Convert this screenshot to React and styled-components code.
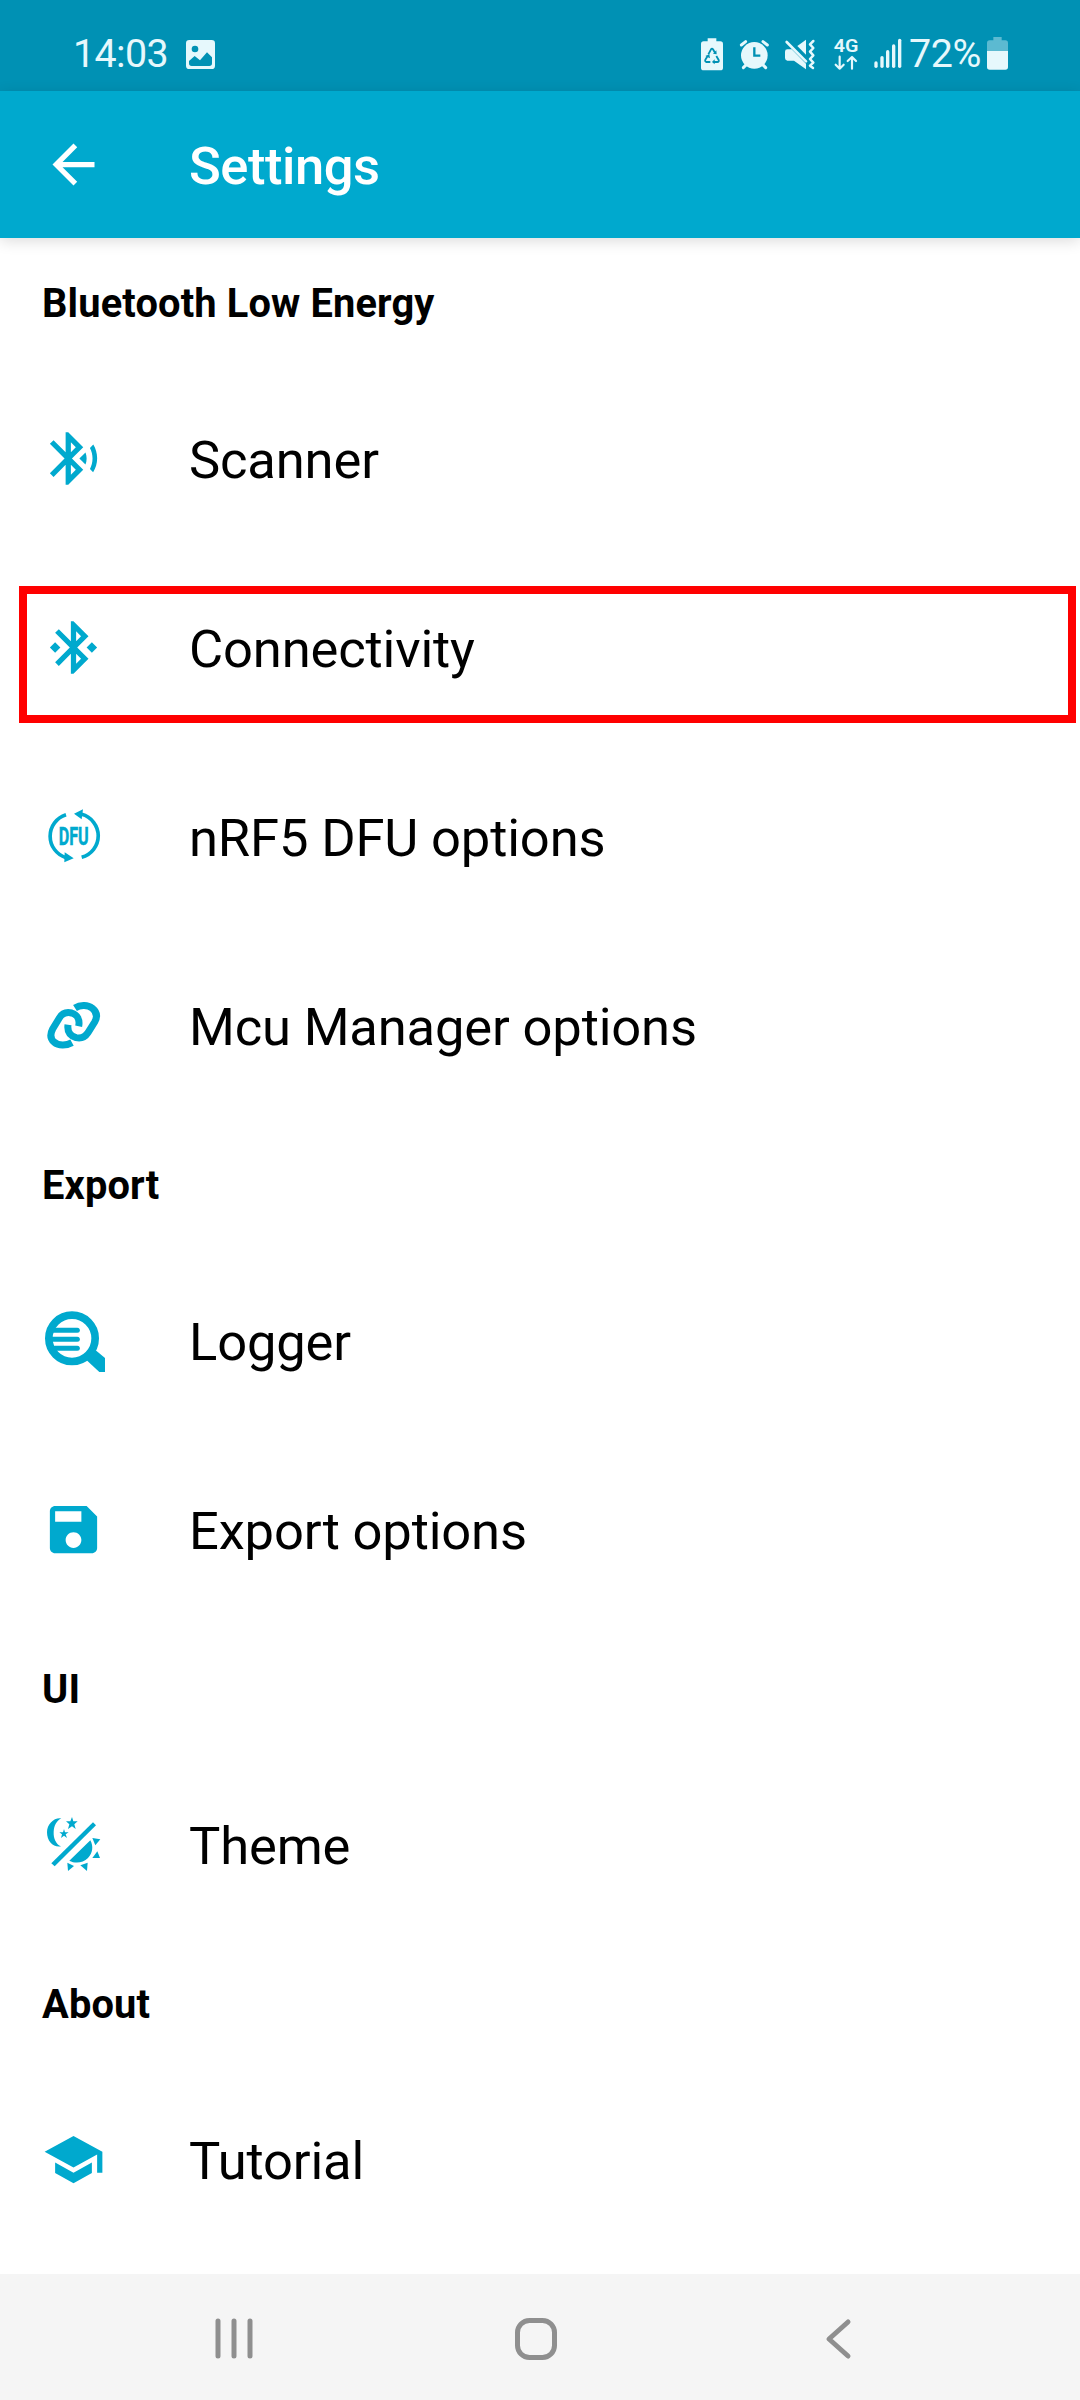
import React from "react";
import styled, { createGlobalStyle } from "styled-components";

const ACCENT = "#00a9ce";
const STATUS_TINT = "#e6f8fc";
const STATUS_BG = "#0091b4";

const GlobalStyle = createGlobalStyle`
  body {
    margin: 0;
    background: #fff;
    font-family: Roboto, "Liberation Sans", sans-serif;
  }
`;

const Screen = styled.div`
  display: flex;
  flex-direction: column;
  width: 1080px;
  height: 2400px;
  overflow: hidden;
  background: #fff;
`;

const StatusBar = styled.header`
  display: flex;
  align-items: center;
  justify-content: space-between;
  box-sizing: border-box;
  height: 91px;
  padding: 17px 71px 0 73px;
  background: ${STATUS_BG};
  color: ${STATUS_TINT};
`;

const StatusGroup = styled.div`
  display: flex;
  align-items: center;
  height: 34px;
`;

const StatusText = styled.span`
  width: ${(p) => p.$width}px;
  margin-left: ${(p) => p.$gap || 0}px;
  font-size: 39.4px;
  line-height: 34px;
  letter-spacing: ${(p) => p.$spacing || 0}px;
  white-space: nowrap;
`;

const StatusIcon = styled.svg`
  flex: none;
  display: block;
  width: ${(p) => p.$width}px;
  height: 34px;
  margin-left: ${(p) => p.$gap || 0}px;
  overflow: visible;
  fill: ${STATUS_TINT};
`;

const AppBar = styled.div`
  position: relative;
  flex: none;
  display: flex;
  align-items: center;
  box-sizing: border-box;
  height: 147px;
  padding: 0 42px;
  background: ${ACCENT};
  box-shadow: 0 3px 14px rgba(0, 0, 0, 0.14);
`;

const Glyph = styled.svg`
  flex: none;
  display: block;
  width: 63px;
  height: 63px;
  fill: ${(p) => p.$color || ACCENT};
`;

const Title = styled.h1`
  margin: 3px 0 0 84px;
  font-size: 52.5px;
  font-weight: 500;
  line-height: 62px;
  letter-spacing: -0.45px;
  color: #fff;
`;

const Content = styled.main`
  flex: 1;
  display: flex;
  flex-direction: column;
`;

const SectionTitle = styled.h2`
  flex: none;
  display: flex;
  align-items: center;
  box-sizing: border-box;
  height: 126px;
  margin: 0;
  padding: 4px 42px 0;
  font-size: 39.8px;
  font-weight: 700;
  letter-spacing: 0.15px;
  color: #000;
`;

const Row = styled.div`
  position: relative;
  flex: none;
  display: flex;
  align-items: center;
  height: 189px;
  padding: 0 42px;
`;

const RowLabel = styled.span`
  margin: 3px 0 0 84px;
  font-size: 52.5px;
  line-height: 62px;
  letter-spacing: -0.15px;
  color: #000;
  white-space: nowrap;
`;

const Highlight = styled.div`
  position: absolute;
  top: 33px;
  left: 19px;
  box-sizing: border-box;
  width: 1057px;
  height: 137px;
  border: 8px solid #f00;
`;

const NavBar = styled.nav`
  flex: none;
  display: flex;
  align-items: center;
  justify-content: space-between;
  box-sizing: border-box;
  height: 126px;
  padding: 4px 208px 0 202px;
  background: #f5f5f5;
`;

const NavIcon = styled.svg`
  display: block;
  width: 64px;
  height: 64px;
  fill: none;
  stroke: #8f8f8f;
  stroke-width: 5;
  stroke-linecap: round;
  stroke-linejoin: round;
`;

const ScannerIcon = () => (
  <Glyph viewBox="0 0 24 24">
    <path d="M14.24 12.01l2.32 2.32c.28-.72.44-1.51.44-2.33 0-.82-.16-1.59-.43-2.31l-2.33 2.32zm5.29-5.3l-1.26 1.26c.63 1.21.98 2.57.98 4.02 0 1.45-.36 2.82-.98 4.02l1.2 1.2c.97-1.54 1.54-3.36 1.54-5.31-.01-1.89-.55-3.67-1.48-5.19zm-3.82 1L10 2H9v7.59L4.41 5 3 6.41 8.59 12 3 17.59 4.41 19 9 14.41V22h1l5.71-5.71-4.3-4.29 4.3-4.29zM11 5.83l1.88 1.88L11 9.59V5.83zm1.88 10.46L11 18.17v-3.76l1.88 1.88z" />
  </Glyph>
);

const ConnectivityIcon = () => (
  <Glyph viewBox="0 0 24 24">
    <path d="M7 12l-2-2-2 2 2 2 2-2zm10.71-4.29L12 2h-1v7.59L6.41 5 5 6.41 10.59 12 5 17.59 6.41 19 11 14.41V22h1l5.71-5.71-4.3-4.29 4.3-4.29zM13 5.83l1.88 1.88L13 9.59V5.83zm1.88 10.46L13 18.17v-3.76l1.88 1.88zM19 10l-2 2 2 2 2-2-2-2z" />
  </Glyph>
);

const DfuIcon = () => (
  <Glyph viewBox="36 45 189 189">
    <g fill="none" stroke={ACCENT} strokeWidth="11">
      <path d="M108 74A67.5 67.5 0 0 0 108 203" />
      <path d="M155 202A66.7 66.7 0 0 0 155 73" />
    </g>
    <path d="M132 71L159 58L155 88Z" />
    <path d="M131 205L104 187L103 217Z" />
    <text
      x="86"
      y="165"
      fontSize="77"
      fontWeight="700"
      stroke={ACCENT}
      strokeWidth="1.5"
      textLength="90"
      lengthAdjust="spacingAndGlyphs"
    >
      DFU
    </text>
  </Glyph>
);

const LinkIcon = () => (
  <Glyph viewBox="36 42 189 189">
    <g fill="none" stroke={ACCENT} strokeWidth="21">
      <path d="M126 188C108 198 86 198 72 186C58 173 61 160 68 147L88 114C97 99 112 96 125 99C142 104 150 120 146 139" />
      <path d="M135 84C152 73 174 75 187 85C203 98 202 112 194 126L174 158C165 172 152 176 138 173C122 168 111 156 114 134" />
    </g>
  </Glyph>
);

const LoggerIcon = () => (
  <Glyph viewBox="36 57 189 189">
    <circle cx="126" cy="145" r="69.5" fill="none" stroke={ACCENT} strokeWidth="23" />
    <g fill="none" stroke={ACCENT} strokeWidth="15" strokeLinecap="round">
      <path d="M70 121H142" />
      <path d="M66 148H142" />
      <path d="M74 175H142" />
    </g>
    <path d="M197 181L225 204V246H208L170 211Z" />
  </Glyph>
);

const SaveIcon = () => (
  <Glyph viewBox="0 0 24 24">
    <path d="M17 3H5c-1.11 0-2 .9-2 2v14c0 1.1.89 2 2 2h14c1.1 0 2-.9 2-2V7l-4-4zm-5 16c-1.66 0-3-1.34-3-3s1.34-3 3-3 3 1.34 3 3-1.34 3-3 3zm3-10H5V5h10v4z" />
  </Glyph>
);

const ThemeIcon = () => (
  <Glyph viewBox="36 39 189 189">
    <path d="M94 55C72 52 51 72 51 97C51 125 70 143 93 139C78 132 70 116 71 95C72 77 80 62 94 55Z" />
    <path d="M126 51L130 64L143 64L133 73L137 87L126 79L114 87L118 73L108 64L121 64Z" />
    <path d="M102 87L105 97L116 97L107 103L111 114L102 107L93 114L96 103L88 97L99 97Z" />
    <path d="M189 67L198 76L74 199L64 190Z" />
    <path d="M181 121C191 139 188 160 174 174C159 189 136 192 118 182Z" />
    <path d="M187 114L211 118L196 136Z" />
    <path d="M202 154L210 174L187 174Z" />
    <path d="M151 196L173 188L171 213Z" />
    <path d="M112 188L132 198L114 213Z" />
  </Glyph>
);

const TutorialIcon = () => (
  <Glyph viewBox="0 0 24 24">
    <path d="M5 13.18v4L12 21l7-3.82v-4L12 17l-7-3.82zM12 3L1 9l11 6 9-4.91V17h2V9L12 3z" />
  </Glyph>
);

const BackArrow = () => (
  <Glyph viewBox="0 0 24 24" $color="#fff">
    <path d="M20 11H7.83l5.59-5.59L12 4l-8 8 8 8 1.41-1.41L7.83 13H20v-2z" />
  </Glyph>
);

const PictureIcon = () => (
  <StatusIcon viewBox="555 111 93 102" $width={31} $gap={16}>
    <path
      fillRule="evenodd"
      d="M568 120H635Q645 120 645 130V197Q645 207 635 207H568Q558 207 558 197V130Q558 120 568 120ZM585 137A10 10 0 1 0 585 157A10 10 0 1 0 585 137ZM567 183V190Q567 198 575 198H628Q636 198 636 190V172L621 157L600 181L584 168Z"
    />
  </StatusIcon>
);

const BatterySaverIcon = () => (
  <StatusIcon viewBox="60 51 72 102" $width={24}>
    <path d="M83 55H109V64H121Q129 64 129 72V143Q129 151 121 151H71Q63 151 63 143V72Q63 64 71 64H83Z" />
    <g fill="none" stroke={STATUS_BG} strokeWidth="5.5" strokeLinejoin="round">
      <path d="M85 103L93 88Q96 84 99 88L105 98" />
      <path d="M109 108L116 120Q118 126 112 126H100" />
      <path d="M91 126H79Q74 125 76 119L83 108" />
    </g>
    <path fill={STATUS_BG} d="M99 101L110 103L109 91ZM104 118V133L96 126ZM76 108L88 103L90 115Z" />
  </StatusIcon>
);

const AlarmIcon = () => (
  <StatusIcon viewBox="177 51 93 102" $width={31} $gap={15}>
    <circle cx="223" cy="106" r="40" />
    <g fill="none" stroke={STATUS_TINT} strokeWidth="9" strokeLinecap="round">
      <path d="M184 75L197 65" />
      <path d="M262 75L249 65" />
      <path d="M190 143L199 134" />
      <path d="M257 143L248 134" />
    </g>
    <path d="M223 82V107H241" fill="none" stroke={STATUS_BG} strokeWidth="7" />
  </StatusIcon>
);

const MuteIcon = () => (
  <StatusIcon viewBox="312 51 93 102" $width={31} $gap={14}>
    <path d="M315 95Q315 88 322 88H335L378 131V148L342 122H322Q315 121 315 114Z" />
    <path d="M352 78L378 59V104Z" />
    <path
      d="M320 66L378 124"
      fill="none"
      stroke={STATUS_TINT}
      strokeWidth="8"
      strokeLinecap="round"
    />
    <path
      d="M400 63L390 73L400 84L390 95L400 106L390 117L400 128L390 137L399 144"
      fill="none"
      stroke={STATUS_TINT}
      strokeWidth="7.5"
      strokeLinecap="round"
      strokeLinejoin="round"
    />
  </StatusIcon>
);

const NetworkIcon = () => (
  <StatusIcon viewBox="459 51 78 102" $width={26} $gap={18}>
    <text x="461" y="97" fontSize="55" fontWeight="600" textLength="74" lengthAdjust="spacingAndGlyphs">
      4G
    </text>
    <g fill="none" stroke={STATUS_TINT} strokeWidth="6.5" strokeLinecap="round" strokeLinejoin="round">
      <path d="M479 110V146M467 134L479 146L491 134" />
      <path d="M516 146V111M503 123L516 111L528 123" />
    </g>
  </StatusIcon>
);

const SignalIcon = () => (
  <StatusIcon viewBox="579 51 90 102" $width={30} $gap={14}>
    <g fill="none" stroke={STATUS_TINT} strokeWidth="10" strokeLinecap="round">
      <path d="M588 129V139" />
      <path d="M606 113V139" />
      <path d="M623 95V139" />
      <path d="M641 78V139" />
      <path d="M659 61V139" />
    </g>
  </StatusIcon>
);

const BatteryIcon = () => (
  <StatusIcon viewBox="918 51 69 102" $width={23}>
    <path opacity="0.4" d="M940 51H965V61H976Q984 61 984 69V93H921V69Q921 61 929 61H940Z" />
    <path d="M921 93H984V141Q984 149 976 149H929Q921 149 921 141Z" />
  </StatusIcon>
);

const SECTIONS = [
  {
    title: "Bluetooth Low Energy",
    items: [
      { label: "Scanner", Icon: ScannerIcon },
      { label: "Connectivity", Icon: ConnectivityIcon, highlighted: true },
      { label: "nRF5 DFU options", Icon: DfuIcon },
      { label: "Mcu Manager options", Icon: LinkIcon },
    ],
  },
  {
    title: "Export",
    items: [
      { label: "Logger", Icon: LoggerIcon },
      { label: "Export options", Icon: SaveIcon },
    ],
  },
  { title: "UI", items: [{ label: "Theme", Icon: ThemeIcon }] },
  { title: "About", items: [{ label: "Tutorial", Icon: TutorialIcon }] },
];

export default function App() {
  return (
    <>
      <GlobalStyle />
      <Screen>
        <StatusBar>
          <StatusGroup>
            <StatusText $width={96} $spacing={-0.6}>14:03</StatusText>
            <PictureIcon />
          </StatusGroup>
          <StatusGroup>
            <BatterySaverIcon />
            <AlarmIcon />
            <MuteIcon />
            <NetworkIcon />
            <SignalIcon />
            <StatusText $width={77} $gap={6} $spacing={-0.4}>72%</StatusText>
            <BatteryIcon />
          </StatusGroup>
        </StatusBar>
        <AppBar>
          <BackArrow />
          <Title>Settings</Title>
        </AppBar>
        <Content>
          {SECTIONS.map(({ title, items }) => (
            <React.Fragment key={title}>
              <SectionTitle>{title}</SectionTitle>
              {items.map(({ label, Icon, highlighted }) => (
                <Row key={label}>
                  <Icon />
                  <RowLabel>{label}</RowLabel>
                  {highlighted && <Highlight />}
                </Row>
              ))}
            </React.Fragment>
          ))}
        </Content>
        <NavBar>
          <NavIcon viewBox="0 0 64 64">
            <path d="M16 14V49M32 14V49M48 14V49" />
          </NavIcon>
          <NavIcon viewBox="0 0 64 64">
            <rect x="12.5" y="13.5" width="37" height="37" rx="12" />
          </NavIcon>
          <NavIcon viewBox="0 0 64 64">
            <path d="M40 15L21 32L40 49" />
          </NavIcon>
        </NavBar>
      </Screen>
    </>
  );
}
